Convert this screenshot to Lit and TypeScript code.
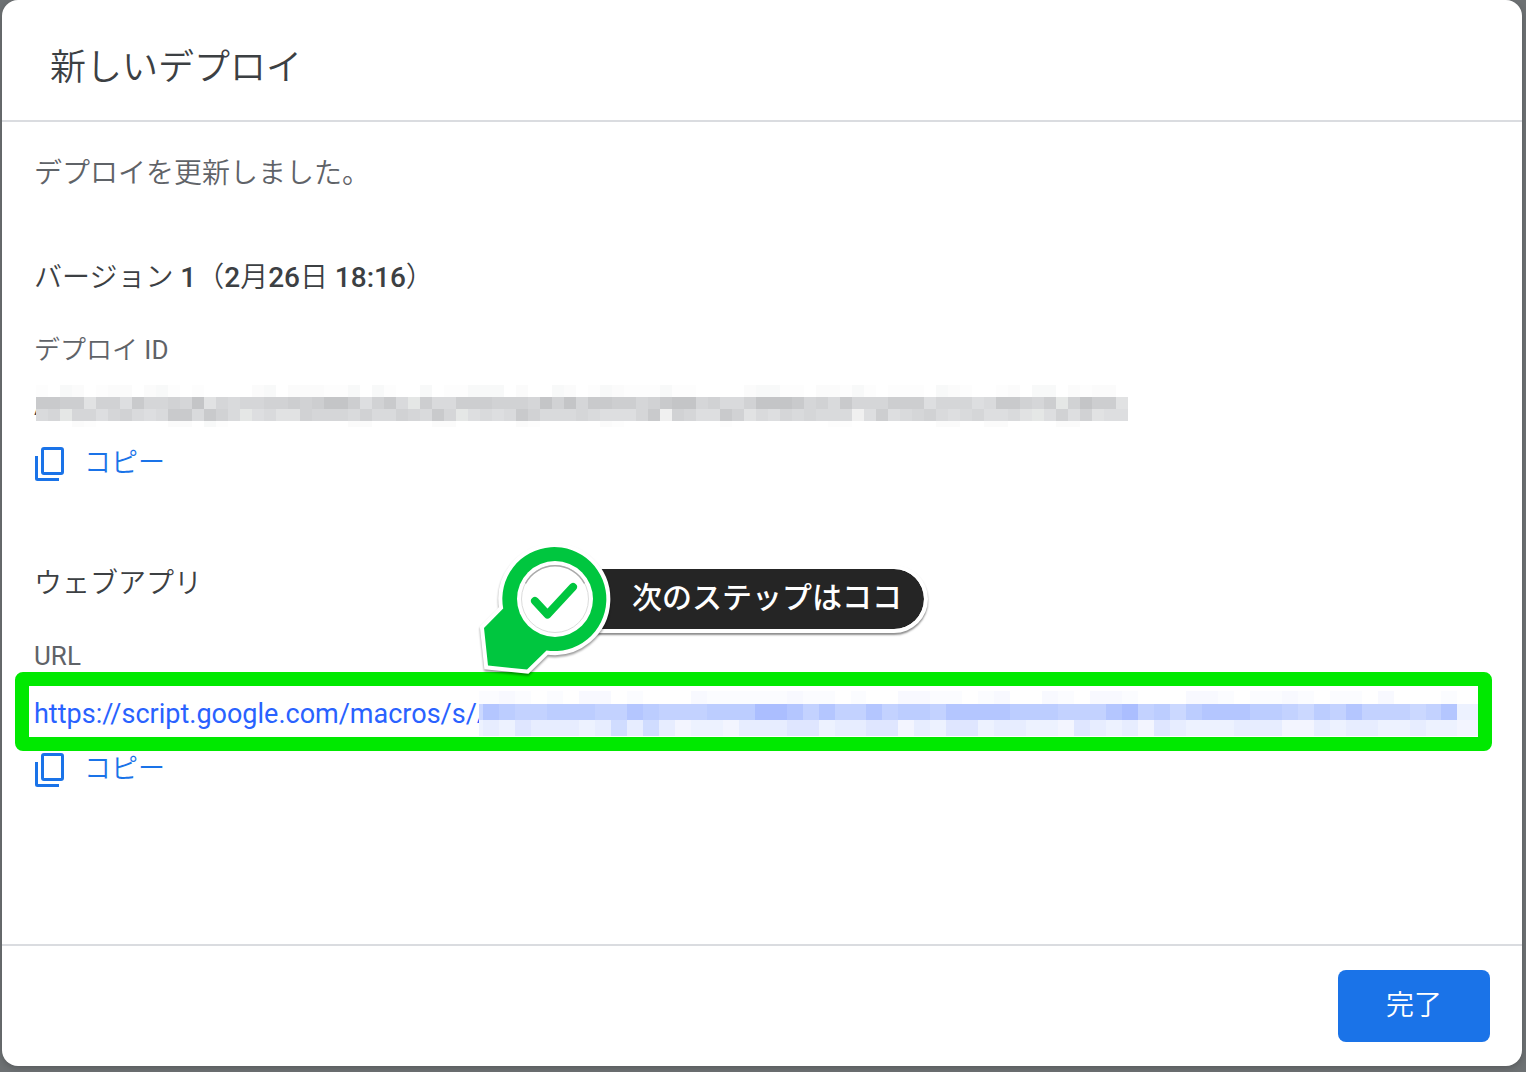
import { LitElement, html, svg, css } from "lit";
import { customElement, property } from "lit/decorators.js";

const TONES: Record<string, string> = {
  a: "#c4c5c7", b: "#c9cacc", c: "#cdced0", d: "#d1d2d4", e: "#d5d6d8",
  f: "#d9dadc", g: "#dddee0", h: "#e1e2e3", i: "#e5e7e6", j: "#f0f0f0",
  k: "#f8f9f9", l: "#fbfbfb", m: "#fdfdfd", n: "#ffffff",
  p: "#abbeff", q: "#b4c6ff", r: "#bccdff", s: "#c3d2ff", t: "#cbd8ff",
  u: "#d0dcff", v: "#dfe6ff", w: "#e7edff", x: "#edf2ff", y: "#f3f5ff",
  z: "#f8f9ff", o: "#fbfcff",
};

interface MosaicRow {
  height: number;
  cells: string;
}

const ID_ROWS: MosaicRow[] = [
  { height: 12, cells: "mnklnmllnlkmnmnnnnlknlllmmknkmnnknmmkkknlnnklnmklmmmkmmnnnnlkkmmnllmkmnmmmnklmnnmlnkknlmlln" },
  { height: 12, cells: "bbcchddgbeedeahefeeddcdcaacgdbficffcccdddeadaebbccedbaaedffdaaabedfbeeecccgeeegfbbdecidacch" },
  { height: 12, cells: "feieegedfgfbbfbdfigfhhdeeefdffdefbeigfgfbdfffefgggebjdeggbdhfgefefffjgcgfedfgfeggfhigdgdhgg" },
  { height: 6, cells: "nnnlmnnnnnnllnkmnnnnnnnnnnllnnnnnllnnnnnlmnnnnnlmnnnnnnnnmnnnnnnnnmmnnnnnnnllnnllnnnnllnnnn" },
];

const URL_ROWS: MosaicRow[] = [
  { height: 13, cells: "oozononzznonnnzooooozoononnzzoonoznnzonzzonnnzzonoozonoonznnnonn" },
  { height: 16, cells: "tqrssrrrssqrsssrrrppqsqssqsrrsqqqqrrrsssqpsrtrqqqrrstrsqssstsqxx" },
  { height: 16, cells: "xwxvwwwxwuwuwyxxywwwvvxwwvvywxvvxwwxxyvwxwyvwxxxwwwyywxwwxxwxxyy" },
];

@customElement("pixel-mosaic")
export class PixelMosaic extends LitElement {
  @property({ type: Number }) cell = 12;
  /** Width cut off the first column. */
  @property({ type: Number }) lead = 0;
  @property({ attribute: false }) rows: MosaicRow[] = [];

  static styles = css`
    :host { display: block; line-height: 0; }
    .mosaic { display: block; width: 100%; height: auto; }
  `;

  render() {
    const columns = Math.max(...this.rows.map((r) => r.cells.length));
    const width = columns * this.cell - this.lead;
    const height = this.rows.reduce((sum, r) => sum + r.height, 0);
    let top = 0;
    const bands = this.rows.map((row) => {
      const y = top;
      top += row.height;
      return [...row.cells].map(
        (tone, i) => svg`<rect x=${i * this.cell} y=${y} width=${this.cell} height=${row.height} fill=${TONES[tone]}></rect>`
      );
    });
    return html`<svg class="mosaic" viewBox="${this.lead} 0 ${width} ${height}" shape-rendering="crispEdges" aria-hidden="true">${bands}</svg>`;
  }
}

@customElement("copy-button")
export class CopyButton extends LitElement {
  static styles = css`
    :host { display: block; }
    .copy {
      display: flex;
      align-items: center;
      gap: 18px;
      height: 40px;
      padding: 0;
      border: 0;
      background: none;
      color: #1a73e8;
      font: 350 27px/36px Roboto, "Noto Sans CJK JP", sans-serif;
      cursor: pointer;
    }
    .icon { width: 32px; height: 36px; }
    .label { padding-bottom: 2px; }
  `;

  render() {
    return html`<button class="copy" type="button">
      <svg class="icon" viewBox="0 0 32 36" fill="none" stroke="currentColor" stroke-width="3" aria-hidden="true">
        <rect x="8.5" y="2.5" width="20" height="25" rx="1.5"></rect>
        <path d="M2.5 10V32.5Q2.5 33.5 3.500 33.500H25"></path>
      </svg>
      <span class="label">コピー</span>
    </button>`;
  }
}

@customElement("step-callout")
export class StepCallout extends LitElement {
  static styles = css`
    :host { display: flex; align-items: flex-start; }
    .pin {
      position: relative;
      z-index: 1;
      flex: none;
      width: 136px;
      height: 136px;
      filter: drop-shadow(0 2px 1px rgba(0, 0, 0, 0.4));
    }
    .pill {
      height: 60px;
      margin: 23px 0 0 -20px;
      padding: 0 22px 0 40px;
      border: 4px solid #fff;
      border-left: 0;
      border-radius: 0 34px 34px 0;
      background: #252525;
      background-clip: padding-box;
      box-shadow: 0 2px 2px rgba(0, 0, 0, 0.45);
      color: #fff;
      font: 500 30px/52px "Noto Sans CJK JP", sans-serif;
      white-space: nowrap;
    }
  `;

  render() {
    return html`
      <svg class="pin" viewBox="0 0 136 136" aria-hidden="true">
        <g fill="#00c63f" stroke="#fff" stroke-width="8" paint-order="stroke">
          <path d="M27.200 66.500 8 86 12 123.500 51 127.500 70.500 108.500A52 52 0 1 0 27.200 66.500Z"></path>
        </g>
        <circle cx="79" cy="57" r="38" fill="#fff"></circle>
        <circle cx="79" cy="57" r="33.500" fill="none" stroke="#dcdcdc" stroke-width="1"></circle>
        <path d="M49.500 41.500A33.500 33.500 0 0 1 108.500 41.500" fill="none" stroke="#aaa" stroke-width="1.500"></path>
        <path d="M59 59 71.500 72.500 97 45" fill="none" stroke="#00c63f" stroke-width="8" stroke-linecap="round" stroke-linejoin="round"></path>
      </svg>
      <div class="pill">次のステップはココ</div>
    `;
  }
}

@customElement("app-root")
export class AppRoot extends LitElement {
  static styles = css`
    :host {
      display: flex;
      box-sizing: border-box;
      min-height: 100vh;
      padding: 0 4px 6px 2px;
      background: #6d7173;
      font-family: Roboto, "Noto Sans CJK JP", sans-serif;
      font-weight: 350;
      color: #3c4043;
    }
    .dialog {
      flex: 1;
      min-width: 0;
      display: flex;
      flex-direction: column;
      border-radius: 16px;
      background: #fff;
      box-shadow: 0 2px 6px rgba(0, 0, 0, 0.2);
    }
    .header {
      padding: 48px 48px 32px;
      border-bottom: 2px solid #dadce0;
    }
    .title {
      margin: 0;
      font-size: 36px;
      line-height: 40px;
      font-weight: 350;
    }
    .content {
      flex: 1;
      padding: 32px;
      line-height: 40px;
    }
    .message, .heading, .label { margin: 0; font-weight: 350; }
    .message { font-size: 28px; color: #5f6368; }
    .heading { font-size: 28px; }
    .heading.version { margin-top: 64px; }
    .strong { font-weight: 500; }
    .latin { font-weight: 400; }
    .label { margin-top: 32px; font-size: 26px; color: #5f6368; }
    .id {
      display: flex;
      align-items: center;
      height: 42px;
      margin: 15px 0 17px;
      font-size: 27px;
    }
    .id-mask {
      position: relative;
      width: 75%;
      max-width: 1093px;
      margin-left: -15px;
    }
    .heading.app { margin-top: 80px; }
    .url {
      position: relative;
      display: flex;
      align-items: center;
      margin: 15px 0 14px;
    }
    .link {
      flex: none;
      padding-top: 2px;
      color: #2962ff;
      font-size: 27px;
      font-weight: 400;
      text-decoration: none;
    }
    .url-mask {
      position: relative;
      flex: 1;
      margin-left: -15px;
    }
    .frame {
      position: absolute;
      inset: -19px -2px -15px -19px;
      border: 14px solid #00e900;
      border-radius: 8px;
      pointer-events: none;
    }
    .callout {
      position: absolute;
      left: 442px;
      bottom: 58px;
    }
    .footer {
      display: flex;
      justify-content: flex-end;
      padding: 24px 32px;
      border-top: 2px solid #dadce0;
    }
    .done {
      height: 72px;
      padding: 0 48px;
      border: 0;
      border-radius: 8px;
      background: #1a73e8;
      color: #fff;
      font: 350 28px/40px Roboto, "Noto Sans CJK JP", sans-serif;
      cursor: pointer;
    }
  `;

  render() {
    return html`
      <section class="dialog" role="dialog" aria-labelledby="title" lang="ja">
        <header class="header"><h1 class="title" id="title">新しいデプロイ</h1></header>
        <div class="content">
          <p class="message">デプロイを更新しました。</p>
          <h2 class="heading version">バージョン <span class="strong">1</span>（<span class="strong">2</span>月<span class="strong">26</span>日 <span class="strong">18:16</span>）</h2>
          <h3 class="label">デプロイ <span class="latin">ID</span></h3>
          <div class="id">
            <span>A</span>
            <pixel-mosaic class="id-mask" .cell=${12} .rows=${ID_ROWS}></pixel-mosaic>
          </div>
          <copy-button></copy-button>
          <h2 class="heading app">ウェブアプリ</h2>
          <h3 class="label"><span class="latin">URL</span></h3>
          <div class="url">
            <a class="link" href="https://script.google.com/macros/s/">https://script.google.com/macros/s/A</a>
            <pixel-mosaic class="url-mask" .cell=${16} .lead=${12} .rows=${URL_ROWS}></pixel-mosaic>
            <div class="frame"></div>
            <step-callout class="callout"></step-callout>
          </div>
          <copy-button></copy-button>
        </div>
        <footer class="footer"><button class="done" type="button">完了</button></footer>
      </section>
    `;
  }
}
